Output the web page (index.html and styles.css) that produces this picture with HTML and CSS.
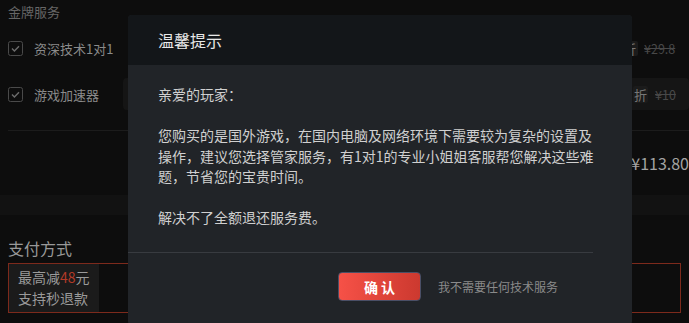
FILE: index.html
```html
<!DOCTYPE html>
<html lang="zh-CN">
<head>
<meta charset="utf-8">
<title>温馨提示</title>
<link rel="stylesheet" href="styles.css">
</head>
<body>
<div class="page">
  <div class="section-title">金牌服务</div>
  <div class="svc-row">
    <div class="svc-label">
      <svg class="cb" width="15" height="15" viewBox="0 0 15 15"><rect x="0.5" y="0.5" width="14" height="14" rx="2" fill="none" stroke="#4a4a4a"/><path d="M4 7.6 L6.4 10 L11 5.2" fill="none" stroke="#6c6c6c" stroke-width="1.4"/></svg>
      <span>资深技术1对1</span>
    </div>
    <div class="svc-opts first">
      <span class="tag">折</span>
      <span class="old-price p1">¥29.8</span>
    </div>
  </div>
  <div class="svc-row">
    <div class="svc-label">
      <svg class="cb" width="15" height="15" viewBox="0 0 15 15"><rect x="0.5" y="0.5" width="14" height="14" rx="2" fill="none" stroke="#4a4a4a"/><path d="M4 7.6 L6.4 10 L11 5.2" fill="none" stroke="#6c6c6c" stroke-width="1.4"/></svg>
      <span>游戏加速器</span>
    </div>
    <div class="svc-opts band">
      <span class="tag">折</span>
      <span class="old-price p2">¥10</span>
    </div>
  </div>
  <div class="total-row">
    <span class="total">¥113.80</span>
  </div>
</div>
<div class="band-strip"></div>
<div class="page">
  <div class="pay-title">支付方式</div>
  <div class="pay-box">
    <div class="pay-opt">
      <div>最高减<span class="red">48</span>元</div>
      <div>支持秒退款</div>
    </div>
  </div>
</div>

<div class="modal">
  <div class="modal-head">温馨提示</div>
  <div class="modal-body">
    <p>亲爱的玩家：</p>
    <p>您购买的是国外游戏，在国内电脑及网络环境下需要较为复杂的设置及操作，建议您选择管家服务，有1对1的专业小姐姐客服帮您解决这些难题，节省您的宝贵时间。</p>
    <p>解决不了全额退还服务费。</p>
  </div>
  <div class="modal-foot">
    <button class="btn-ok">确 认</button>
    <span class="link">我不需要任何技术服务</span>
  </div>
</div>
</body>
</html>
```

FILE: styles.css
```css
html, body {
  margin: 0;
  padding: 0;
}
body {
  width: 689px;
  height: 323px;
  overflow: hidden;
  background: #0d0d0d;
  font-family: "Noto Sans CJK SC", "Noto Sans", sans-serif;
  position: relative;
}
.page {
  padding: 0 8px;
}
.section-title {
  height: 24px;
  line-height: 24px;
  font-size: 13px;
  color: #666;
}
.svc-row {
  display: flex;
  align-items: stretch;
  height: 32px;
  margin-top: 8px;
  margin-right: -8px;
}
.svc-row + .svc-row {
  margin-top: 14px;
}
.svc-label {
  width: 115px;
  display: flex;
  align-items: center;
  font-size: 13px;
  color: #8a8a8a;
}
.cb {
  margin-right: 11px;
  flex: none;
}
.svc-opts {
  flex: 1;
  display: flex;
  align-items: center;
  justify-content: flex-end;
  gap: 7px;
  padding-right: 9px;
  border-radius: 4px;
}
.svc-opts.first {
  gap: 6px;
  padding-right: 11px;
}
.svc-opts.first .tag {
  padding: 0 2px 0 2px;
  line-height: 15px;
}
.svc-opts.band {
  background: #151515;
}
.tag {
  background: #1b1b1b;
  color: #777;
  font-size: 13px;
  line-height: 17px;
  padding: 0 1px;
  border-radius: 2px;
}
.old-price {
  display: inline-block;
  color: #484848;
  font-size: 12.5px;
  text-decoration: line-through;
  white-space: nowrap;
}
.old-price.p1 {
  width: 34px;
}
.old-price.p2 {
  width: 25px;
}
.total-row {
  margin-top: 20px;
  border-top: 1px solid #1c1c1c;
  height: 64px;
  display: flex;
  align-items: center;
  justify-content: flex-end;
  margin-right: -8px;
}
.total {
  font-size: 16px;
  color: #a3a3a3;
}
.band-strip {
  height: 20px;
  background: #121212;
}
.pay-title {
  margin-top: 23px;
  font-size: 16px;
  line-height: 20px;
  color: #999;
}
.pay-box {
  margin-top: 5px;
  height: 48px;
  border: 1px solid #7d2a1c;
  display: flex;
}
.pay-opt {
  width: 90px;
  background: #1b1b1b;
  padding: 3px 0 0 9px;
  box-sizing: border-box;
  font-size: 14px;
  line-height: 21px;
  color: #9a9a9a;
}
.red {
  color: #b23a28;
}

.modal {
  position: absolute;
  left: 128px;
  top: 15px;
  width: 504px;
  height: 310px;
  background: #212428;
  border-radius: 4px;
  overflow: hidden;
}
.modal-head {
  height: 50px;
  line-height: 50px;
  padding-left: 30px;
  background: #131619;
  color: #e8e8e8;
  font-size: 16px;
}
.modal-body {
  height: 188px;
  box-sizing: border-box;
  padding: 19px 30px 0 30px;
  margin-right: 39px;
  border-bottom: 1px solid #383b40;
  color: #d0d0d0;
  font-size: 14px;
  line-height: 20.5px;
}
.modal-body p {
  margin: 0 0 20.5px 0;
  width: 440px;
}
.modal-foot {
  display: flex;
  align-items: center;
  padding: 19px 0 0 210px;
}
.btn-ok {
  width: 83px;
  height: 29px;
  border: 1px solid #4a4f66;
  border-radius: 4px;
  background: linear-gradient(90deg, #f65147, #cc392f);
  color: #fff;
  font-family: inherit;
  font-size: 14px;
  font-weight: bold;
  padding: 0;
}
.link {
  margin-left: 17px;
  font-size: 12px;
  color: #8a8a8a;
}
```
